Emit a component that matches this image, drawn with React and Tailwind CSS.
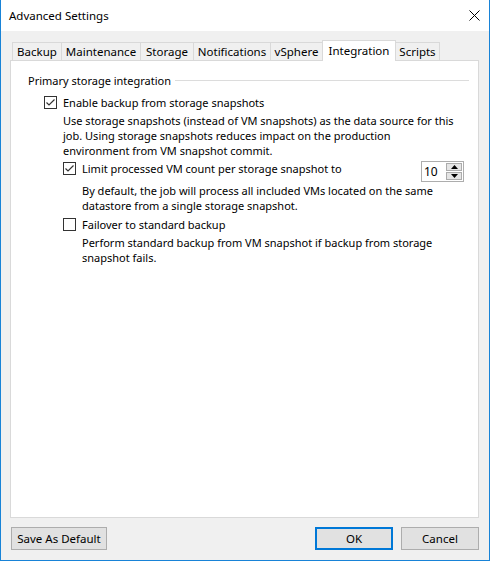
import React from 'react';

const tabs = [
  { label: 'Backup', w: 'w-[49px]' },
  { label: 'Maintenance', w: 'w-[79px]' },
  { label: 'Storage', w: 'w-[53px]' },
  { label: 'Notifications', w: 'w-[77px]' },
  { label: 'vSphere', w: 'w-[52px]' },
  { label: 'Integration', w: 'w-[74px]', active: true },
  { label: 'Scripts', w: 'w-[44px]', last: true },
];

const Checkbox = ({ checked }) => (
  <span className="w-[13px] h-[13px] shrink-0 border border-[#333333] bg-white flex items-center justify-center">
    {checked && (
      <svg width="11" height="11" viewBox="0 0 11 11">
        <path d="M1.5 5.5 L4 8 L9.5 2.5" fill="none" stroke="#333333" strokeWidth="1.2" />
      </svg>
    )}
  </span>
);

const Spinner = ({ value }) => (
  <div className="ml-auto w-[43px] h-[21px] border border-[#adadad] bg-white flex">
    <span className="flex-1 pl-[2px] leading-[19px] text-[12px]">{value}</span>
    <div className="flex flex-col gap-px mt-[1px] mr-[1px] w-[16px]">
      <span className="h-[8px] bg-[#e5e5e5] border border-[#acacac] flex items-center justify-center">
        <svg width="7" height="4" viewBox="0 0 7 4"><path d="M0 4 L3.5 0 L7 4 Z" fill="#000" /></svg>
      </span>
      <span className="h-[8px] bg-[#e5e5e5] border border-[#acacac] flex items-center justify-center">
        <svg width="7" height="4" viewBox="0 0 7 4"><path d="M0 0 L7 0 L3.5 4 Z" fill="#000" /></svg>
      </span>
    </div>
  </div>
);

const Button = ({ children, w, primary }) => (
  <button
    className={`${w} h-[23px] bg-[#e1e1e1] text-[11.5px] text-black flex items-center justify-center ${
      primary ? 'border-2 border-[#0078d7]' : 'border border-[#adadad]'
    }`}
  >
    {children}
  </button>
);

export default function App() {
  return (
    <div className="w-[490px] h-[561px] flex flex-col border-x border-b border-[#1883d7] bg-[#f0f0f0] font-['Noto_Sans',sans-serif] text-[11px] text-black leading-[15px]">
      {/* title bar */}
      <div className="h-[31px] shrink-0 bg-white flex items-center justify-between pl-[8px] pr-[9px]">
        <span className="text-[11.5px]">Advanced Settings</span>
        <svg width="11" height="11" viewBox="0 0 11 11">
          <path d="M0.5 0.5 L10.5 10.5 M10.5 0.5 L0.5 10.5" stroke="#000" strokeWidth="1" />
        </svg>
      </div>

      <div className="flex-1 flex flex-col pl-[9px] pr-[10px] pt-[9px] pb-[10px]">
        {/* tabs */}
        <div className="h-[20px] shrink-0 flex items-start pl-[2px] text-[11.5px]">
          {tabs.map((t) =>
            t.active ? (
              <div
                key={t.label}
                className={`${t.w} h-[21px] relative z-10 bg-white border-t border-x border-[#d9d9d9] flex items-center justify-center pb-[2px]`}
              >
                {t.label}
              </div>
            ) : (
              <div
                key={t.label}
                className={`${t.w} h-[18px] mt-[2px] bg-[#f0f0f0] border-t border-[#d9d9d9] flex items-center justify-center ${
                  t.last ? 'border-r' : 'border-l'
                }`}
              >
                {t.label}
              </div>
            )
          )}
        </div>

        {/* panel */}
        <div className="flex-1 bg-white border border-[#d9d9d9] pt-[12px] pl-[17px]">
          <div className="flex items-center pr-[9px]">
            <span>Primary storage integration</span>
            <span className="flex-1 h-px bg-[#dcdcdc] ml-[4px]" />
          </div>

          <div className="pl-[16px] pr-[14px]">
            <div className="flex items-center gap-[6px] mt-[7px]">
              <Checkbox checked />
              <span>Enable backup from storage snapshots</span>
            </div>
            <div className="pl-[19px] mt-[3px]">
              <p className="whitespace-nowrap">
                Use storage snapshots (instead of VM snapshots) as the data source for this
                <br />
                job. Using storage snapshots reduces impact on the production
                <br />
                environment from VM snapshot commit.
              </p>

              <div className="flex items-start gap-[6px] mt-[3px]">
                <span className="mt-[1px]">
                  <Checkbox checked />
                </span>
                <span>Limit processed VM count per storage snapshot to</span>
                <Spinner value="10" />
              </div>
              <p className="pl-[19px] mt-[1px] whitespace-nowrap">
                By default, the job will process all included VMs located on the same
                <br />
                datastore from a single storage snapshot.
              </p>

              <div className="flex items-center gap-[6px] mt-[4px]">
                <Checkbox />
                <span>Failover to standard backup</span>
              </div>
              <p className="pl-[19px] mt-[3px] whitespace-nowrap">
                Perform standard backup from VM snapshot if backup from storage
                <br />
                snapshot fails.
              </p>
            </div>
          </div>
        </div>

        {/* buttons */}
        <div className="h-[23px] mt-[9px] flex items-center pl-[1px]">
          <Button w="w-[96px]">Save As Default</Button>
          <div className="ml-auto flex gap-[8px]">
            <Button w="w-[78px]" primary>
              OK
            </Button>
            <Button w="w-[78px]">Cancel</Button>
          </div>
        </div>
      </div>
    </div>
  );
}
